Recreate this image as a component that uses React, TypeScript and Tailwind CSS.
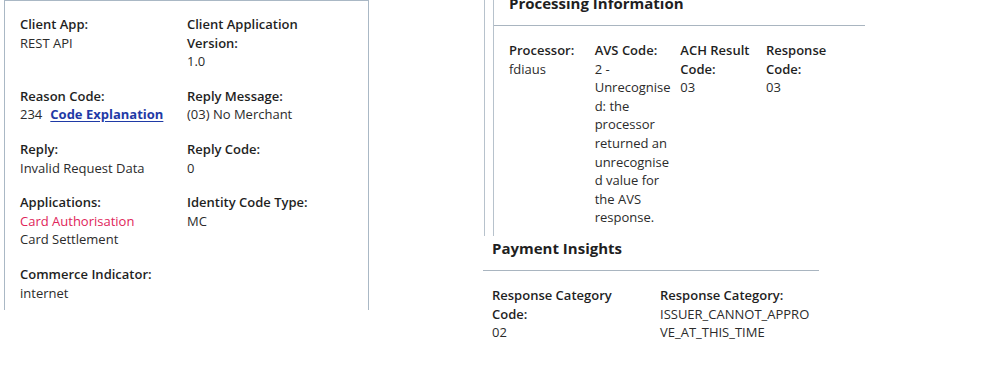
import React from "react";

const Field = ({ label, children }: { label: string; children?: React.ReactNode }) => (
  <div>
    <div className="font-semibold text-[#1f1f1f]">{label}</div>
    <div className="text-[#2b2b2b]">{children}</div>
  </div>
);

export default function App() {
  return (
    <div className="flex w-[998px] h-[368px] bg-white font-['Open_Sans',sans-serif] text-[13px] leading-[18.6px] text-[#2b2b2b] overflow-hidden">
      {/* Left panel */}
      <div className="ml-[4px] w-[365px] h-[310px] shrink-0 border-x border-t border-[#aab8c5] pl-[15px] pr-[15px] pt-[14px]">
        <div className="grid grid-cols-[167px_160px] gap-y-[16px]">
          <Field label="Client App:">REST API</Field>
          <div>
            <div className="font-semibold text-[#1f1f1f] w-[150px]">Client Application Version:</div>
            <div>1.0</div>
          </div>
          <Field label="Reason Code:">
            <span>234</span>
            <a href="#" className="ml-[8px] font-bold text-[#1f3aa6] underline underline-offset-2">Code Explanation</a>
          </Field>
          <Field label="Reply Message:">(03) No Merchant</Field>
          <Field label="Reply:">Invalid Request Data</Field>
          <Field label="Reply Code:">0</Field>
          <Field label="Applications:">
            <div className="text-[#e0245a]">Card Authorisation</div>
            <div>Card Settlement</div>
          </Field>
          <Field label="Identity Code Type:">MC</Field>
          <Field label="Commerce Indicator:">internet</Field>
        </div>
      </div>

      {/* Right side */}
      <div className="ml-[115px] w-[390px] shrink-0 flex flex-col">
        <div className="h-[236px] border-l border-[#b7c2cc] pl-[8px]">
          <div className="h-full border-l border-[#b7c2cc]">
            <div className="flex h-[26px] w-[371px] border-b border-[#a9b5c0] pl-[15px]">
              <div className="-mt-[7px] text-[15px] leading-[20px] font-bold text-[#1f1f1f]">Processing Information</div>
            </div>
            <div className="pl-[15px] pt-[15px] grid grid-cols-[repeat(4,79px)] gap-x-[6.67px]">
              <Field label="Processor:">fdiaus</Field>
              <div className="break-words">
                <div className="font-semibold text-[#1f1f1f]">AVS Code:</div>
                <div>2 - Unrecognised: the processor returned an unrecognised value for the AVS response.</div>
              </div>
              <Field label="ACH Result Code:">03</Field>
              <Field label="Response Code:">03</Field>
            </div>
          </div>
        </div>
        <div className="-ml-[1px] w-[336px] mt-[2px]">
          <div className="px-[9px] pb-[12px] border-b border-[#a9b5c0] text-[15px] leading-[20px] font-bold text-[#1f1f1f]">
            Payment Insights
          </div>
          <div className="pl-[9px] pt-[15px] grid grid-cols-[155px_153px] gap-x-[13px]">
            <Field label="Response Category Code:">02</Field>
            <div className="break-words">
              <div className="font-semibold text-[#1f1f1f]">Response Category:</div>
              <div>ISSUER_CANNOT_APPROVE_AT_THIS_TIME</div>
            </div>
          </div>
        </div>
      </div>
    </div>
  );
}
